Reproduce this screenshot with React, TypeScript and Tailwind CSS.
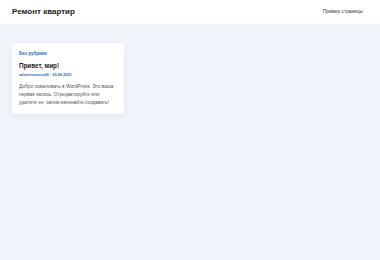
export default function App() {
  return (
    <div className="min-h-[260px] w-[380px] bg-[#f0f5fc] font-['Liberation_Sans',Arial,sans-serif]">
      <header className="flex h-[24px] items-center justify-between bg-white pl-[12px] pr-[17px]">
        <div className="text-[8px] font-bold text-[#222222]">Ремонт квартир</div>
        <div className="text-[4.8px] text-[#333333]">Пример страницы</div>
      </header>
      <main className="px-[12px] pt-[19px]">
        <article className="w-[112px] rounded-[3px] bg-white pl-[7px] pr-[9px] pt-[8px] pb-[7px] shadow-[0_2px_6px_rgba(15,40,90,0.07)]">
          <div className="text-[4.5px] font-bold leading-[6px] text-[#2b6fc4]">Без рубрики</div>
          <h2 className="mt-[5px] text-[6.3px] font-bold leading-[8px] text-[#222222]">Привет, мир!</h2>
          <div className="mt-[3px] text-[3.8px] font-bold leading-[5px] text-[#2b6fc4]">admininanovo00 · 29.08.2025</div>
          <p className="mt-[5px] text-[4.8px] leading-[8px] text-[#555555]">
            Добро пожаловать в WordPress. Это ваша первая запись. Отредактируйте или удалите ее, затем начинайте создавать!
          </p>
        </article>
      </main>
    </div>
  );
}
